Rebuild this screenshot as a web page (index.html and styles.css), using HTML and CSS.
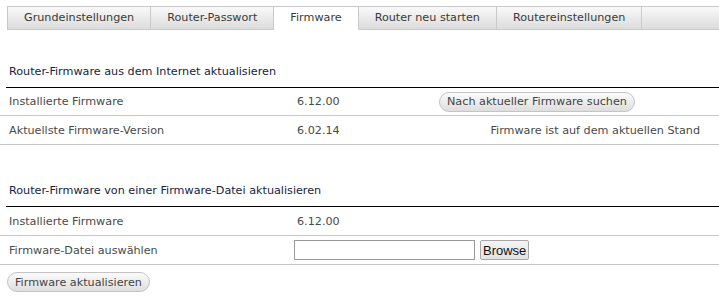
FILE: index.html
```html
<!DOCTYPE html>
<html>
<head>
<meta charset="UTF-8">
<title>Firmware</title>
<link rel="stylesheet" href="styles.css">
</head>
<body>
	<!-- tabs -->
	<div class="tabs">
		<div class="tab">Grundeinstellungen</div>
		<div class="tab">Router-Passwort</div>
		<div class="tab active">Firmware</div>
		<div class="tab">Router neu starten</div>
		<div class="tab">Routereinstellungen</div>
		<div class="tab filler"></div>
	</div>

	<!-- internet update -->
	<div class="section first">
		<h2 class="sectionTitle">Router-Firmware aus dem Internet aktualisieren</h2>
		<table class="grid">
			<tr class="short">
				<td class="label">Installierte Firmware</td>
				<td class="value">6.12.00</td>
				<td class="action"><button class="pill" id="idsearch">Nach aktueller Firmware suchen</button></td>
			</tr>
			<tr>
				<td class="label">Aktuellste Firmware-Version</td>
				<td class="value">6.02.14</td>
				<td class="action status">Firmware ist auf dem aktuellen Stand</td>
			</tr>
		</table>
	</div>

	<!-- file update -->
	<div class="section">
		<h2 class="sectionTitle">Router-Firmware von einer Firmware-Datei aktualisieren</h2>
		<table class="grid">
			<tr>
				<td class="label">Installierte Firmware</td>
				<td class="value">6.12.00</td>
				<td class="action"></td>
			</tr>
			<tr>
				<td class="label">Firmware-Datei auswählen</td>
				<td class="file" colspan="2">
					<span class="fileName"></span><button class="browse">Browse</button>
				</td>
			</tr>
		</table>
		<button class="pill update">Firmware aktualisieren</button>
	</div>
</body>
</html>
```

FILE: styles.css
```css
body {
	margin: 0;
	font-family: "DejaVu Sans", sans-serif;
	font-size: 11.2px;
	color: #4a4a4a;
	background: #fff;
}

/* tab bar */
.tabs {
	display: flex;
	margin: 6px 0 0 7px;
}

.tab {
	height: 22px;
	line-height: 22px;
	padding: 0 16px;
	border: 1px solid #c9c9c9;
	border-left: none;
	background: linear-gradient(#f9f9f9, #dcdcdc);
	color: #3a3a3a;
	font-size: 11.2px;
}

.tab:first-child {
	border-left: 1px solid #c9c9c9;
}

.tab.active {
	background: #fff;
	border-bottom-color: #fff;
}

.tab.filler {
	flex: 1;
	border-right: none;
}

/* sections */
.section {
	margin-top: 38px;
}

.section.first {
	margin-top: 34px;
}

.sectionTitle {
	margin: 0 0 0 6px;
	padding: 0 0 7px 3px;
	border-bottom: 1px solid #000;
	font-size: 11.2px;
	font-weight: normal;
	line-height: 16px;
	color: #142348;
}

.grid {
	width: 100%;
	border-collapse: collapse;
}

.grid td {
	height: 28px;
	padding: 0;
	border-bottom: 1px solid #c6c6c6;
	vertical-align: middle;
}

.grid .short td {
	height: 27px;
}

.label {
	width: 285px;
	padding-left: 9px !important;
}

.value {
	width: 142px;
	padding-left: 3px !important;
}

.status {
	text-align: right;
	padding-right: 19px !important;
}

/* rounded buttons */
.pill {
	height: 20px;
	padding: 0 7px;
	border: 1px solid #c4c4c4;
	border-radius: 10px;
	background: linear-gradient(#fbfbfb, #dedede);
	font-family: "DejaVu Sans", sans-serif;
	font-size: 11.2px;
	color: #444;
}

.update {
	margin: 7px 0 0 7px;
	padding: 0 7px;
}

/* file picker */
.fileName {
	display: inline-block;
	width: 179px;
	height: 18px;
	border: 1px solid #9a9a9a;
	vertical-align: middle;
}

.browse {
	margin-left: 5px;
	height: 20px;
	padding: 0 2px;
	border: 1px solid #a8a8a8;
	border-radius: 2px;
	background: linear-gradient(#f4f4f4, #e2e2e2);
	font-family: "Liberation Sans", Arial, sans-serif;
	font-size: 13px;
	color: #111;
	vertical-align: middle;
}
```
